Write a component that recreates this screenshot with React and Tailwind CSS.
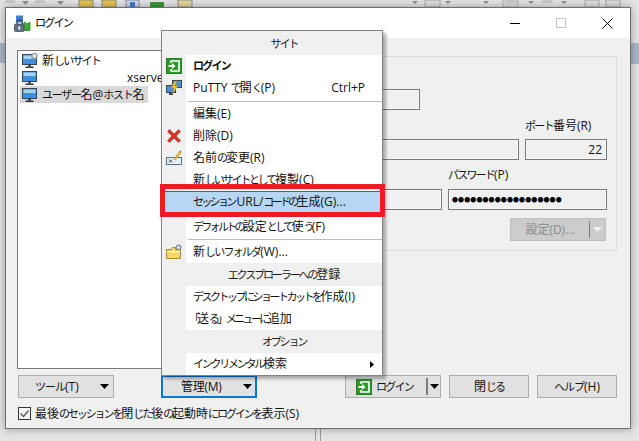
const FONT = "font-['Open_Sans','Noto_Sans_CJK_JP',sans-serif]";

// Kana are set a little smaller and tighter than the kanji around them
function K({ t, children }) {
  return <span className={`text-[11px] ${t}`}>{children}</span>;
}

// Monitor glyph used for tree entries
function Monitor({ gear = false }) {
  return (
    <svg width="16" height="16" viewBox="0 0 16 16" className="shrink-0">
      <rect x="0.5" y="1.500" width="14" height="10" fill="#3f8fdc" stroke="#3c4652" />
      <rect x="1.500" y="2.500" width="12" height="3.500" fill="#a9d3f5" />
      <rect x="6" y="12" width="3" height="1.500" fill="#3c4652" />
      <rect x="3.500" y="13.500" width="8" height="1.500" fill="#2b333c" />
      {gear && <circle cx="12.500" cy="3" r="2.600" fill="#dfe6ee" stroke="#8b97a5" strokeWidth="1.200" />}
    </svg>
  );
}

function LoginIcon({ size = 16 }) {
  return (
    <svg width={size} height={size} viewBox="0 0 16 16" className="shrink-0">
      <rect x="0" y="0" width="16" height="16" fill="#2d9a2b" />
      <rect x="0.5" y="0.5" width="15" height="15" fill="none" stroke="#1f7f20" />
      <path d="M5 5V3h8v10H5v-2" fill="none" stroke="#fff" strokeWidth="1.600" />
      <path d="M2.500 7h3.500V5l3.500 3-3.500 3V9H2.500z" fill="#fff" />
    </svg>
  );
}

function PuttyIcon() {
  return (
    <svg width="16" height="16" viewBox="0 0 16 16">
      <rect x="6.500" y="0.500" width="9" height="7" fill="#4a90d9" stroke="#3c4652" />
      <rect x="0.500" y="5.500" width="9" height="7" fill="#4a90d9" stroke="#3c4652" />
      <rect x="3" y="13" width="4" height="2" fill="#3c4652" />
      <path d="M9 1L5 8h3l-2 6 6-8H9l2-5z" fill="#f2c230" stroke="#b58a14" strokeWidth="0.500" />
    </svg>
  );
}

function DeleteIcon() {
  return (
    <svg width="16" height="16" viewBox="0 0 16 16">
      <path d="M1.500 3.500l2-2L8 6l4.500-4.500 2 2L10 8l4.500 4.500-2 2L8 10l-4.500 4.500-2-2L6 8z" fill="#d8342a" stroke="#b3241c" strokeWidth="0.600" />
    </svg>
  );
}

function RenameIcon() {
  return (
    <svg width="16" height="16" viewBox="0 0 16 16">
      <rect x="0.500" y="7.500" width="15" height="7" fill="#e8f1fa" stroke="#54708f" />
      <path d="M3 9.500l3 3M6 9.500l-3 3" stroke="#3c4652" />
      <path d="M8 9l5.500-7.500 1.500 1L9.500 10z" fill="#f0b93a" stroke="#a8781a" strokeWidth="0.500" />
      <path d="M13.500 1.500l1.500 1 .6-1-1.400-1z" fill="#d9534f" />
    </svg>
  );
}

function FolderIcon() {
  return (
    <svg width="16" height="16" viewBox="0 0 16 16">
      <path d="M0.500 5.500h5l1-2h3v2h5v9h-14z" fill="#f6d860" stroke="#a58a2a" />
      <rect x="1" y="7" width="13" height="1.500" fill="#fff3b0" />
      <circle cx="12.500" cy="3.500" r="2.400" fill="#dfe6ee" stroke="#7d8896" strokeWidth="1.200" />
    </svg>
  );
}

// Lock and connected-screens mark in the title bar
function AppIcon() {
  return (
    <svg width="17" height="17" viewBox="0 0 17 17">
      <rect x="2" y="0.500" width="7" height="7" fill="#3f7fd8" />
      <path d="M8 10l3-3 2 2 3-2v8.500H8z" fill="#3cab3a" stroke="#1f7f20" strokeWidth="0.700" />
      <path d="M3 9V7.500a2.600 2.600 0 0 1 5.200 0V9" fill="none" stroke="#3c4652" strokeWidth="1.200" />
      <rect x="0.500" y="9" width="9.500" height="7.500" rx="1" fill="#5f6f85" stroke="#3c4652" strokeWidth="0.700" />
      <rect x="4.400" y="11.500" width="1.800" height="3" fill="#fff" />
    </svg>
  );
}

function Caret({ color = "#000" }) {
  return (
    <svg width="9" height="5" viewBox="0 0 9 5" className="shrink-0">
      <path d="M0 0h9L4.500 5z" fill={color} />
    </svg>
  );
}

function Field({ className = "", children }) {
  return (
    <div className={`h-[21px] border border-[#7a7a7a] bg-[#f0f0f0] outline outline-1 -outline-offset-2 outline-white/60 flex items-center ${className}`}>
      {children}
    </div>
  );
}

// Section captions are centred over the text column, clear of the icon gutter
function Header({ h, className = "", children }) {
  return (
    <div className={`${h} flex items-center justify-center pl-[24px] bg-[#f0f0f0] text-[#1b1b1b] ${className}`}>
      <span>{children}</span>
    </div>
  );
}

function Item({ icon, children, className = "", right, h = "h-[22px]", arrow = false }) {
  return (
    <div className={`${h} flex`}>
      <div className="w-[24px] shrink-0 bg-[#f0f0f0] flex items-center justify-center">{icon}</div>
      <div className="flex-1 flex items-center pl-[7px] pr-[8px] bg-white">
        <span className={`${className} flex-1`}>{children}</span>
        {right && <span className="mr-[9px]">{right}</span>}
        {arrow && (
          <svg width="4" height="7" viewBox="0 0 4 7"><path d="M0 0l4 3.500L0 7z" fill="#000" /></svg>
        )}
      </div>
    </div>
  );
}

function Sep({ h = "h-[4px]" }) {
  return (
    <div className={`${h} flex`}>
      <div className="w-[24px] bg-[#f0f0f0]" />
      <div className="flex-1 bg-white flex items-center pl-[2px]">
        <div className="h-px w-full bg-[#bdbdbd]" />
      </div>
    </div>
  );
}

function Btn({ className = "", border = "border border-[#adadad]", children }) {
  return (
    <div className={`h-[23px] ${border} bg-[#e1e1e1] flex items-center ${className}`}>
      {children}
    </div>
  );
}

function ContextMenu() {
  return (
    <div className="absolute left-[161px] top-[30px] w-[222px] border border-[#828282] bg-white shadow-[3px_3px_3px_rgba(0,0,0,0.3)]">
      <Header h="h-[24px]" className="pt-[2px]"><K t="tracking-[-2px]">サイト</K></Header>
      <Item icon={<LoginIcon />} className="font-bold"><K t="tracking-[-1.750px]">ログイン</K></Item>
      <Item icon={<PuttyIcon />} right="Ctrl+P">PuTTY <K t="tracking-[-2px]">で</K>開<K t="tracking-[-2px]">く</K>(P)</Item>
      <Sep />
      <Item>編集(E)</Item>
      <Item icon={<DeleteIcon />}>削除(D)</Item>
      <Item icon={<RenameIcon />}>名前<K t="tracking-[-2px]">の</K>変更(R)</Item>
      <Item>新<K t="tracking-[-2.200px]">しいサイトとして</K>複製(C)</Item>
      <div className="h-[22px] bg-[#b5d7f3] border border-[#0078d7] flex items-center pl-[30px]">
        <span><K t="tracking-[-2.700px]">セッション</K><span className="ml-[2px]">URL/</span><K t="tracking-[-2.700px]">コードの</K>生成(G)...</span>
      </div>
      <Item h="h-[25px]" className="pt-[3px]"><K t="tracking-[-2.700px]">デフォルトの</K>設定<K t="tracking-[-2.700px]">として</K>使<K t="tracking-[-2.700px]">う</K>(F)</Item>
      <Sep h="h-[3px]" />
      <Item icon={<FolderIcon />}>新<K t="tracking-[-1.800px]">しいフォルダ</K>(W)...</Item>
      <Header h="h-[23px]"><K t="tracking-[-2.100px]">エクスプローラーへの</K>登録</Header>
      <Item><K t="tracking-[-2.500px]">デスクトップにショートカットを</K>作成(I)</Item>
      <Item><K t="tracking-[-3.100px] -ml-[4px]">「</K>送<K t="tracking-[-2.600px]">る」メニューに</K>追加</Item>
      <Header h="h-[23px]"><K t="tracking-[-2.200px]">オプション</K></Header>
      <Item arrow><K t="tracking-[-2.250px]">インクリメンタル</K>検索</Item>
      {/* Emphasis frame around the URL generation entry */}
      <div className="absolute left-[-2px] top-[153px] w-[225px] h-[33px] border-[5px] border-[#ed1c24]" />
    </div>
  );
}

function LoginDialog() {
  return (
    <div className="absolute left-[5px] top-[7px] w-[626px] h-[422px] border border-[#6e6e6e] bg-[#f0f0f0] flex flex-col shadow-[0_0_8px_rgba(0,0,0,0.35)]">
      <div className="h-[30px] bg-white flex items-center shrink-0">
        <div className="ml-[8px] mr-[4px]"><AppIcon /></div>
        <span className="text-black"><K t="tracking-[-1.750px]">ログイン</K></span>
        <div className="ml-auto flex items-center">
          <div className="w-[46px] flex justify-center"><div className="w-[10px] h-px bg-black" /></div>
          <div className="w-[46px] flex justify-center"><div className="w-[10px] h-[10px] border border-[#c4c4c4]" /></div>
          <div className="w-[46px] flex justify-center">
            <svg width="11" height="11" viewBox="0 0 11 11"><path d="M0.500 0.500l10 10M10.500 0.500l-10 10" stroke="#000" /></svg>
          </div>
        </div>
      </div>

      <div className="flex-1 flex flex-col pl-[11px] pr-[13px] pt-[12px]">
        <div className="flex gap-[6px] h-[319px]">
          <div className="w-[150px] shrink-0 border border-[#7a7a7a] bg-white pt-[1px] pl-[2px]">
            <div className="h-[17px] flex items-center gap-[4px] pl-[2px]">
              <Monitor gear />
              <span>新<K t="tracking-[-1.800px]">しいサイト</K></span>
            </div>
            <div className="h-[17px] flex items-center pl-[2px]">
              <Monitor />
              <span className="ml-[89px]">xserver</span>
            </div>
            <div className="h-[17px] w-[128px] flex items-center gap-[4px] pl-[2px] bg-[#d9d9d9]">
              <Monitor />
              <span><K t="tracking-[-1.300px]">ユーザー</K>名@<K t="tracking-[-1.300px]">ホスト</K>名</span>
            </div>
          </div>

          <div className="flex-1 mt-[6px] h-[195px] border border-[#dcdcdc] pt-[32px] pr-[9px] pl-[8px] flex flex-col">
            <Field className="w-[238px] self-start" />
            <div className="mt-[10px] h-[19px] flex justify-end">
              <span className="w-[82px]"><K t="tracking-[-1.700px]">ポート</K>番号(R)</span>
            </div>
            <div className="flex gap-[6px]">
              <Field className="flex-1" />
              <Field className="w-[82px] justify-end pr-[4px]">22</Field>
            </div>
            <div className="mt-[9px] h-[20px] flex justify-end">
              <span className="w-[159px]"><K t="tracking-[-1.800px]">パスワード</K>(P)</span>
            </div>
            <div className="flex gap-[6px]">
              <Field className="flex-1" />
              <Field className="w-[159px] pl-[3px] text-[6px] tracking-[0.100px] text-black">●●●●●●●●●●●●●●●●●●</Field>
            </div>
            <div className="mt-[8px] flex justify-end pr-[1px]">
              <div className="w-[96px] h-[23px] bg-[#cccccc] border border-[#bfbfbf] flex items-center text-[#8a8a8a]">
                <span className="flex-1 text-center">設定(D)...</span>
                <div className="w-px h-[17px] bg-[#7d7d7d] mr-[3px]" />
                <div className="mr-[3px]"><Caret color="#f0f0f0" /></div>
              </div>
            </div>
          </div>
        </div>

        <div className="mt-[6px] flex">
          <Btn className="w-[96px] ml-[1px] pl-[16px] pr-[4px] justify-between">
            <span><K t="tracking-[-1px]">ツール</K>(T)</span>
            <Caret />
          </Btn>
          <Btn className="w-[96px] ml-[47px] pl-[18px] pr-[3px] justify-between" border="border-2 border-[#0078d7]">
            <span className="tracking-[-0.300px]">管理(M)</span>
            <Caret />
          </Btn>
          <Btn className="w-[96px] ml-[88px] pl-[10px]">
            <LoginIcon size={16} />
            <span className="ml-[4px]"><K t="tracking-[-1.750px]">ログイン</K></span>
            <div className="ml-auto w-[2px] h-[17px] bg-[#7d7d7d] mr-[2px]" />
            <div className="mr-[1px]"><Caret /></div>
          </Btn>
          <Btn className="w-[80px] ml-[8px] justify-center">
            <span>閉<K t="tracking-[-2px]">じる</K></span>
          </Btn>
          <Btn className="w-[80px] ml-[8px] justify-center">
            <span><K t="tracking-[-1px]">ヘルプ</K>(H)</span>
          </Btn>
        </div>

        <div className="mt-[9px] ml-[1px] flex items-center gap-[4px]">
          <svg width="13" height="13" viewBox="0 0 13 13" className="shrink-0">
            <rect x="0.500" y="0.500" width="12" height="12" fill="#f4f4f4" stroke="#333" />
            <path d="M2.500 6.500l3 3 5-6" fill="none" stroke="#555" strokeWidth="1.200" />
          </svg>
          <span>
            最後<K t="tracking-[-2.100px]">のセッションを</K>閉<K t="tracking-[-2.100px]">じた</K>後<K t="tracking-[-2.100px]">の</K>起動時<K t="tracking-[-2.100px]">にログインを</K>表示(S)
          </span>
        </div>
      </div>
    </div>
  );
}

// Slivers of the main window's toolbar showing above the dialog
function ToolbarStrip() {
  return (
    <svg width="639" height="8" viewBox="0 0 639 8" className="block">
      <g fill="#c9c9c9">
        <path d="M3 3h12V0h-9zM33 3h12V0h-9z" />
        <path d="M22 1h7l-3.500 4zM57 1h7l-3.500 4z" fill="#8f8f8f" />
      </g>
      <rect x="79" y="0" width="14" height="7" fill="#e9c64f" stroke="#8a8a8a" />
      <rect x="102" y="0" width="14" height="7" fill="#e9c64f" stroke="#8a8a8a" />
      <rect x="126" y="0" width="13" height="7" fill="#d3dcec" stroke="#7e8ea6" />
      <rect x="130" y="2" width="5" height="5" fill="#3f7fd8" />
      <rect x="150" y="2" width="14" height="5" fill="#3c9a3a" />
      <rect x="178" y="0" width="14" height="7" fill="#e8d9a0" stroke="#8a8a8a" />
      <rect x="425" y="0" width="15" height="7" fill="#dedede" stroke="#a4a4a4" />
      <rect x="503" y="0" width="15" height="7" fill="#dedede" stroke="#b5b5b5" />
      <rect x="585" y="0" width="14" height="7" fill="#dedede" stroke="#a4a4a4" />
      <rect x="606" y="0" width="14" height="7" fill="#dedede" stroke="#a4a4a4" />
      <path d="M412 1h6l-3 3zM445 1h6l-3 3zM483 1h6l-3 3zM528 1h6l-3 3zM561 1h6l-3 3z" fill="#8f8f8f" />
      <path d="M505 3h14l-3 -3h-8zM540 3h14l-3 -3h-8z" fill="#c9c9c9" />
    </svg>
  );
}

export default function App() {
  return (
    <div className={`relative w-[639px] h-[441px] overflow-hidden bg-[#e4e4e4] text-[12px] leading-none text-[#111] whitespace-nowrap ${FONT}`}>
      <ToolbarStrip />
      <div className="absolute left-0 top-[43px] w-[5px] h-[20px] bg-[#a9b7c6]" />
      <div className="absolute right-0 top-[43px] w-[8px] h-[21px] bg-[#a9b7c6]" />
      {/* Panel dividers of the main window below the dialog */}
      <div className="absolute left-[315px] top-[429px] w-px h-[12px] bg-[#9a9a9a]" />
      <div className="absolute left-[320px] top-[429px] w-px h-[12px] bg-[#9a9a9a]" />
      <LoginDialog />
      <ContextMenu />
    </div>
  );
}
